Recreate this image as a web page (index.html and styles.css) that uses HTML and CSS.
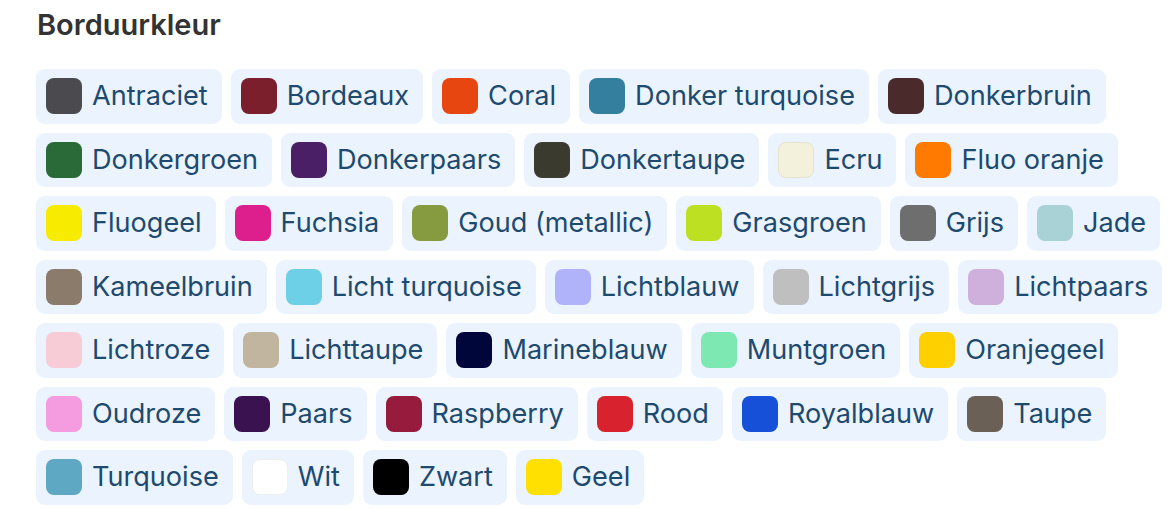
FILE: index.html
```html
<!DOCTYPE html>
<html lang="nl">
<head>
<meta charset="utf-8">
<title>Borduurkleur</title>
<link rel="stylesheet" href="styles.css">
</head>
<body>
<section class="panel">
  <h2 class="title">Borduurkleur</h2>
  <div class="chips">
    <div class="chip"><span class="sw c-antraciet"></span><span class="lbl">Antraciet</span></div>
    <div class="chip"><span class="sw c-bordeaux"></span><span class="lbl">Bordeaux</span></div>
    <div class="chip"><span class="sw c-coral"></span><span class="lbl">Coral</span></div>
    <div class="chip"><span class="sw c-donkerturq"></span><span class="lbl">Donker turquoise</span></div>
    <div class="chip"><span class="sw c-donkerbruin"></span><span class="lbl">Donkerbruin</span></div>
    <div class="chip"><span class="sw c-donkergroen"></span><span class="lbl">Donkergroen</span></div>
    <div class="chip"><span class="sw c-donkerpaars"></span><span class="lbl">Donkerpaars</span></div>
    <div class="chip"><span class="sw c-donkertaupe"></span><span class="lbl">Donkertaupe</span></div>
    <div class="chip"><span class="sw c-ecru"></span><span class="lbl">Ecru</span></div>
    <div class="chip"><span class="sw c-fluooranje"></span><span class="lbl">Fluo oranje</span></div>
    <div class="chip"><span class="sw c-fluogeel"></span><span class="lbl">Fluogeel</span></div>
    <div class="chip"><span class="sw c-fuchsia"></span><span class="lbl">Fuchsia</span></div>
    <div class="chip"><span class="sw c-goud"></span><span class="lbl">Goud (metallic)</span></div>
    <div class="chip"><span class="sw c-grasgroen"></span><span class="lbl">Grasgroen</span></div>
    <div class="chip"><span class="sw c-grijs"></span><span class="lbl">Grijs</span></div>
    <div class="chip"><span class="sw c-jade"></span><span class="lbl">Jade</span></div>
    <div class="chip"><span class="sw c-kameel"></span><span class="lbl">Kameelbruin</span></div>
    <div class="chip"><span class="sw c-lichtturq"></span><span class="lbl">Licht turquoise</span></div>
    <div class="chip"><span class="sw c-lichtblauw"></span><span class="lbl">Lichtblauw</span></div>
    <div class="chip"><span class="sw c-lichtgrijs"></span><span class="lbl">Lichtgrijs</span></div>
    <div class="chip"><span class="sw c-lichtpaars"></span><span class="lbl">Lichtpaars</span></div>
    <div class="chip"><span class="sw c-lichtroze"></span><span class="lbl">Lichtroze</span></div>
    <div class="chip"><span class="sw c-lichttaupe"></span><span class="lbl">Lichttaupe</span></div>
    <div class="chip"><span class="sw c-marine"></span><span class="lbl">Marineblauw</span></div>
    <div class="chip"><span class="sw c-munt"></span><span class="lbl">Muntgroen</span></div>
    <div class="chip"><span class="sw c-oranjegeel"></span><span class="lbl">Oranjegeel</span></div>
    <div class="chip"><span class="sw c-oudroze"></span><span class="lbl">Oudroze</span></div>
    <div class="chip"><span class="sw c-paars"></span><span class="lbl">Paars</span></div>
    <div class="chip"><span class="sw c-raspberry"></span><span class="lbl">Raspberry</span></div>
    <div class="chip"><span class="sw c-rood"></span><span class="lbl">Rood</span></div>
    <div class="chip"><span class="sw c-royal"></span><span class="lbl">Royalblauw</span></div>
    <div class="chip"><span class="sw c-taupe"></span><span class="lbl">Taupe</span></div>
    <div class="chip"><span class="sw c-turquoise"></span><span class="lbl">Turquoise</span></div>
    <div class="chip"><span class="sw c-wit"></span><span class="lbl">Wit</span></div>
    <div class="chip"><span class="sw c-zwart"></span><span class="lbl">Zwart</span></div>
    <div class="chip"><span class="sw c-geel"></span><span class="lbl">Geel</span></div>
  </div>
</section>
</body>
</html>
```
FILE: styles.css
```css
html, body {
  margin: 0;
  padding: 0;
  background: #ffffff;
}
body {
  font-family: Inter, "Noto Sans", "DejaVu Sans", sans-serif;
}
.panel {
  padding: 7px 0 0 36px;
}
.title {
  margin: 0 0 26px 1px;
  font-size: 29px;
  line-height: 36px;
  font-weight: 600;
  color: #333333;
}
.chips {
  display: flex;
  flex-wrap: wrap;
  gap: 9px 9px;
}
.chip {
  display: flex;
  align-items: center;
  gap: 10px;
  padding: 9.25px 14px 9.25px 10px;
  background: #eaf3fe;
  border-radius: 9px;
}
.sw {
  width: 36px;
  height: 36px;
  border-radius: 8px;
  flex: none;
  box-sizing: border-box;
}
.lbl {
  font-size: 27.1px;
  line-height: 36px;
  color: #1d4a6e;
  white-space: nowrap;
}
.c-antraciet { background: #4a4a4f; }
.c-bordeaux { background: #7a1f2b; }
.c-coral { background: #e84610; }
.c-donkerturq { background: #357f9e; }
.c-donkerbruin { background: #4a2a2a; }
.c-donkergroen { background: #2a6a38; }
.c-donkerpaars { background: #4a1f66; }
.c-donkertaupe { background: #3b3a2e; }
.c-ecru { background: #f3f0dc; border: 1px solid #e6e3cc; }
.c-fluooranje { background: #ff7a00; }
.c-fluogeel { background: #f7ec00; }
.c-fuchsia { background: #dc1f8c; }
.c-goud { background: #869a3f; }
.c-grasgroen { background: #bde023; }
.c-grijs { background: #6e6e6e; }
.c-jade { background: #a8d2d6; }
.c-kameel { background: #8b7b6b; }
.c-lichtturq { background: #6dd0e6; }
.c-lichtblauw { background: #b0b3fa; }
.c-lichtgrijs { background: #bfbfbf; }
.c-lichtpaars { background: #cfb0dc; }
.c-lichtroze { background: #f7ccd6; }
.c-lichttaupe { background: #c2b5a0; }
.c-marine { background: #00053a; }
.c-munt { background: #7de8b2; }
.c-oranjegeel { background: #ffd000; }
.c-oudroze { background: #f59ce0; }
.c-paars { background: #3b1250; }
.c-raspberry { background: #961b3c; }
.c-rood { background: #d8232f; }
.c-royal { background: #1650d8; }
.c-taupe { background: #6b6055; }
.c-turquoise { background: #5fa8c4; }
.c-wit { background: #ffffff; border: 1px solid #eeeeee; }
.c-zwart { background: #000000; }
.c-geel { background: #ffe000; }
```
